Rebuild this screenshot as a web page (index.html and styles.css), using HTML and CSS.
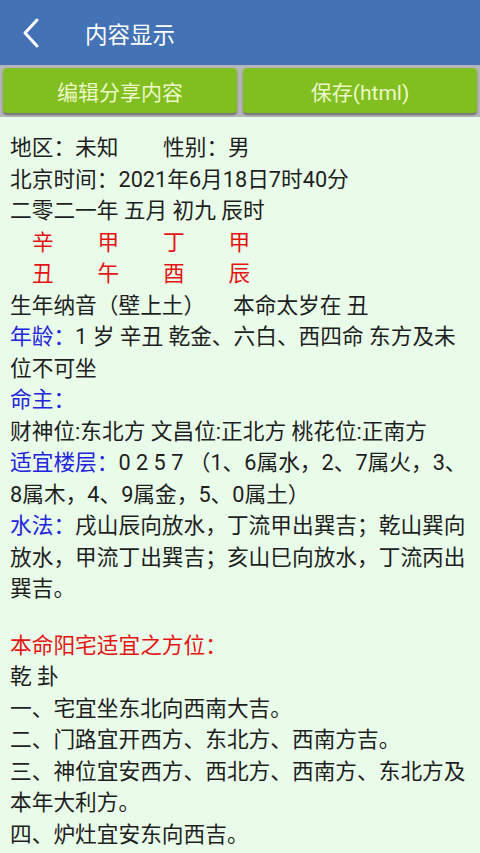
FILE: index.html
```html
<!DOCTYPE html>
<html lang="zh-CN">
<head>
<meta charset="utf-8">
<title>内容显示</title>
<link rel="stylesheet" href="styles.css">
</head>
<body>
<div class="app">
  <header class="topbar">
    <span class="back">
      <svg width="22" height="32" viewBox="0 0 22 32"><path d="M17 3 L5 16 L17 29" fill="none" stroke="#fff" stroke-width="3" stroke-linecap="round" stroke-linejoin="round"/></svg>
    </span>
    <span class="title">内容显示</span>
  </header>
  <div class="actions">
    <button class="btn">编辑分享内容</button>
    <button class="btn">保存(html)</button>
  </div>
  <main class="content">
    <div class="line"><span class="w1">地区：未知</span>性别：男</div>
    <div class="line">北京时间：2021年6月18日7时40分</div>
    <div class="line">二零二一年 五月 初九 辰时</div>
    <div class="line red gz"><span>辛</span><span>甲</span><span>丁</span><span>甲</span></div>
    <div class="line red gz"><span>丑</span><span>午</span><span>酉</span><span>辰</span></div>
    <div class="line"><span class="w2">生年纳音（壁上土）</span>本命太岁在 丑</div>
    <div class="line"><span class="blue">年龄：</span>1 岁 辛丑 乾金、六白、西四命 东方及未位不可坐</div>
    <div class="line"><span class="blue">命主：</span></div>
    <div class="line">财神位:东北方 文昌位:正北方 桃花位:正南方</div>
    <div class="line"><span class="blue">适宜楼层：</span>0 2 5 7 （1、6属水，2、7属火，3、8属木，4、9属金，5、0属土）</div>
    <div class="line"><span class="blue">水法：</span>戌山辰向放水，丁流甲出巽吉；乾山巽向放水，甲流丁出巽吉；亥山巳向放水，丁流丙出巽吉。</div>
    <div class="blank"></div>
    <div class="line red">本命阳宅适宜之方位：</div>
    <div class="line">乾 卦</div>
    <div class="line">一、宅宜坐东北向西南大吉。</div>
    <div class="line">二、门路宜开西方、东北方、西南方吉。</div>
    <div class="line">三、神位宜安西方、西北方、西南方、东北方及本年大利方。</div>
    <div class="line">四、炉灶宜安东向西吉。</div>
  </main>
</div>
</body>
</html>
```
FILE: styles.css
```css
html, body {
  margin: 0;
  padding: 0;
}
body {
  width: 480px;
  height: 853px;
  overflow: hidden;
  background: #e9fce9;
  font-family: Roboto, "Noto Sans CJK SC", "Noto Sans", sans-serif;
}
.app {
  display: flex;
  flex-direction: column;
}
.topbar {
  height: 65px;
  background: #4372b5;
  display: flex;
  align-items: center;
  color: #fff;
}
.back {
  display: flex;
  width: 22px;
  height: 32px;
  margin-left: 20px;
  margin-top: 1px;
}
.title {
  margin-left: 43px;
  font-size: 22.5px;
  color: #fff;
}
.actions {
  height: 52px;
  background: #b5b5bb;
  display: flex;
  gap: 6px;
  padding: 3px 3px 0 3px;
  box-sizing: border-box;
}
.btn {
  flex: 1;
  height: 45px;
  border: none;
  border-radius: 4px;
  background: #80bf1f;
  color: #eef7c8;
  font-family: Roboto, "Noto Sans CJK SC", "Noto Sans", sans-serif;
  font-size: 21px;
  padding: 0;
  box-shadow: 0 2px 2px rgba(60, 60, 60, 0.55);
}
.content {
  padding: 15px 10px 0 10px;
  font-size: 21.7px;
  line-height: 31.5px;
  color: #1e1e1e;
}
.red { color: #e41414; }
.blue { color: #2424dc; }
.w1 {
  display: inline-block;
  width: 153px;
}
.w2 {
  display: inline-block;
  width: 223px;
}
.gz {
  display: flex;
  padding-left: 22px;
}
.gz span {
  width: 65.5px;
}
.blank {
  height: 25px;
}
```
